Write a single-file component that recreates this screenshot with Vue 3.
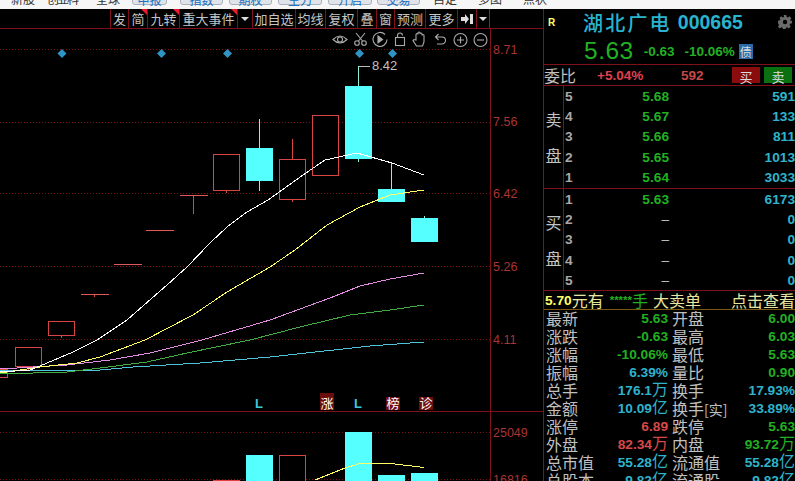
<template>
  <div class="page">
    <div class="topbar">
      <span
        v-for="t in topTabs"
        :key="t.text"
        class="tab"
        :class="{ btn: t.btn, tight: t.tight }"
        :style="{ width: t.w + 'px', marginLeft: t.gap + 'px' }"
      >{{ t.text }}</span>
    </div>
    <div class="main">
      <div class="left">
        <div class="toolbar">
          <div class="tool-spacer"></div>
          <span
            v-for="b in tools"
            :key="b.text"
            class="tool"
            :class="{ flag: b.flag, arrow: b.arrow, pin: b.pin }"
            :style="{ width: b.w + 'px' }"
          >
            <i v-if="b.arrow"></i>
            <svg v-else-if="b.pin" width="12" height="10" viewBox="0 0 12 10"><path d="M0 3h4V0l4 5-4 5V7H0z" fill="#ddd" /><rect x="9" y="0" width="3" height="10" fill="#ddd" /></svg>
            <template v-else>{{ b.text }}</template>
          </span>
        </div>
        <div class="chart">
          <svg class="canvas" width="543" height="452" viewBox="0 29 543 452">
            <line v-for="g in grid" :key="g" x1="0" x2="490" :y1="g" :y2="g" class="dash" />
            <line x1="0" x2="543" y1="411.5" y2="411.5" stroke="#80101a" />
            <line x1="490.5" x2="490.5" y1="29" y2="481" stroke="#80101a" />

            <g v-for="c in candles" :key="c.x">
              <line :x1="c.x + 13.5" :x2="c.x + 13.5" :y1="c.hi" :y2="c.lo" :stroke="c.up ? '#d84545' : '#8ff0e0'" />
              <line v-if="c.doji" :x1="c.x" :x2="c.x + 28" :y1="c.top + 0.5" :y2="c.top + 0.5" stroke="#e05858" />
              <rect v-else-if="c.up" :x="c.x + 0.5" :y="c.top + 0.5" :width="26" :height="c.h" fill="#000" stroke="#d84545" />
              <rect v-else :x="c.x" :y="c.top" :width="27" :height="c.h" fill="#55ffff" />
            </g>

            <polyline v-for="l in lines" :key="l.color" :points="l.points" :stroke="l.color" class="ma" />

            <path v-for="x in diamonds" :key="x" :d="`M${x} 49l4.500 4.500-4.500 4.500-4.500-4.500z`" fill="#2f93c4" />

            <line x1="358.500" x2="358.500" y1="66" y2="86" stroke="#8ff0e0" />
            <line x1="359" x2="370" y1="66.500" y2="66.500" stroke="#bbb" />
            <text x="372" y="70" class="peak">8.42</text>

            <g fill="none" stroke="#aaa" stroke-width="1.100">
              <path d="M333 39.500q7-7 14 0q-7 7-14 0z" /><circle cx="340" cy="39.500" r="2.500" />
              <path d="M356 33l6.500 8M365 33l-6.500 8" /><circle cx="357" cy="43" r="2.300" /><circle cx="364" cy="43" r="2.300" />
              <path d="M385 34.500a7 7 0 1 0 2 5" /><path d="M378 36l4.500 3.500-4.500 3.500z" fill="#aaa" />
              <rect x="395.500" y="37.500" width="9" height="8" /><path d="M397.500 37.500v-2a2.500 2.500 0 0 1 5 0" />
              <path d="M416 40v-5.500a1 1 0 0 1 2 0V33a1 1 0 0 1 2 0v1a1 1 0 0 1 2 0v1.500a1 1 0 0 1 2 0V42l-1.500 4h-6L413 40.500l1-1z" />
              <path d="M436 37h6a3.500 3.500 0 0 1 0 7h-5M438.500 34l-3 3 3 3" />
              <circle cx="460.500" cy="40" r="6.500" /><path d="M457 40h7M460.500 36.500v7" />
              <circle cx="480.500" cy="40" r="6.500" /><path d="M477 40h7" />
            </g>

            <g v-for="m in marks" :key="m.x">
              <rect v-if="m.red" :x="m.x - 7" :y="m.y" width="14" :height="410 - m.y" fill="#6b0d0d" />
              <text :x="m.x" y="408" text-anchor="middle" :class="m.red ? 'mark-red' : 'mark-l'">{{ m.text }}</text>
            </g>

            <text v-for="a in axis" :key="a.text" x="493" :y="a.y" class="axis">{{ a.text }}</text>

            <rect x="246" y="455" width="27" height="30" fill="#55ffff" />
            <rect x="345" y="432" width="27" height="53" fill="#55ffff" />
            <rect x="378" y="475" width="27" height="10" fill="#55ffff" />
            <rect x="411" y="473" width="27" height="12" fill="#55ffff" />
            <rect x="279.500" y="455.500" width="26" height="30" fill="#000" stroke="#d84545" />
            <rect x="213" y="480" width="27" height="2" fill="#e04040" />
            <polyline points="315,480 345,468 358,464 375,463.500 395,464 424,467.500" stroke="#ffff66" class="ma" />
          </svg>
        </div>
      </div>

      <div class="right">
        <div class="head">
          <div class="title-row">
            <span class="r-mark">R</span>
            <span class="name">湖北广电</span>
            <span class="code">000665</span>
            <svg class="gear" width="14" height="14" viewBox="0 0 16 16"><path d="M6.500 0h3l.4 2.200 1.500.6L13.200 1.500l2.100 2.100-1.300 1.800.6 1.500L16 6.500v3l-2.200.4-.6 1.500 1.300 1.800-2.100 2.100-1.800-1.300-1.500.6-.4 2.200h-3l-.4-2.200-1.500-.6-1.800 1.300-2.100-2.100 1.300-1.800-.6-1.500L0 9.500v-3l2.200-.4.600-1.500L1.500 3.600l2.100-2.100 1.800 1.300 1.500-.6z" fill="#6a6a6a" /><circle cx="8" cy="8" r="2.500" fill="#000" /></svg>
          </div>
          <div class="price-row">
            <span class="price">5.63</span>
            <span class="chg">-0.63</span>
            <span class="chg pct">-10.06%</span>
            <span class="bond">债</span>
          </div>
        </div>

        <div class="ratio">
          <span class="label wb">委比</span>
          <span class="ratio-pct">+5.04%</span>
          <span class="ratio-num">592</span>
          <span class="act buy">买</span>
          <span class="act sell">卖</span>
        </div>

        <div v-for="(side, i) in book" :key="side.label" class="book" :class="{ lower: i }">
          <div class="side-label">
            <span v-for="c in side.label" :key="c">{{ c }}</span>
          </div>
          <div class="levels">
            <div v-for="l in side.rows" :key="l.n" class="level">
              <span class="lv-n">{{ l.n }}</span>
              <span class="lv-p" :class="{ none: l.p === '–' }">{{ l.p }}</span>
              <span class="lv-v">{{ l.v }}</span>
            </div>
          </div>
        </div>

        <div class="big-order">
          <span class="yl">5.70</span><span class="cn">元有</span>
          <span class="stars">*****</span><span class="cn grn">手</span>
          <span class="cn bo">大卖单</span>
          <span class="cn look">点击查看</span>
        </div>

        <div class="stats">
          <div v-for="s in stats" :key="s.a" class="stat">
            <span class="label">{{ s.a }}</span>
            <span class="num" :class="s.ac">{{ s.av }}<em v-if="s.au">{{ s.au }}</em></span>
            <span class="label lb2">{{ s.b }}<em v-if="s.bx">{{ s.bx }}</em></span>
            <span class="num" :class="s.bc">{{ s.bv }}<em v-if="s.bu">{{ s.bu }}</em></span>
          </div>
        </div>
      </div>
    </div>
  </div>
</template>

<script setup>
const topTabs = [
  { text: "新股", w: 24, gap: 11 },
  { text: "创业科", w: 30, gap: 12, tight: 1 },
  { text: "全球", w: 24, gap: 19 },
  { text: "中报", w: 35, gap: 12, btn: 1 },
  { text: "指数", w: 43, gap: 13, btn: 1 },
  { text: "期权", w: 43, gap: 6, btn: 1 },
  { text: "主力", w: 44, gap: 6, btn: 1 },
  { text: "开启", w: 44, gap: 6, btn: 1 },
  { text: "交易", w: 43, gap: 5, btn: 1 },
  { text: "自定", w: 24, gap: 13 },
  { text: "多图", w: 24, gap: 21 },
  { text: "点状", w: 24, gap: 21 },
];

const tools = [
  { text: "发", w: 18 },
  { text: "简", w: 19, flag: 1 },
  { text: "九转", w: 32, flag: 1 },
  { text: "重大事件", w: 58, flag: 1 },
  { text: "more", w: 15, arrow: 1 },
  { text: "加自选", w: 43 },
  { text: "均线", w: 30 },
  { text: "复权", w: 32 },
  { text: "叠", w: 19 },
  { text: "窗", w: 18 },
  { text: "预测", w: 31 },
  { text: "更多", w: 32 },
  { text: "pin", w: 19, pin: 1 },
  { text: "menu", w: 14, arrow: 1 },
];

const grid = [49.5, 122.5, 193.5, 266.5, 339.5, 432.5, 479.5];
const axis = [
  { text: "8.71", y: 54 }, { text: "7.56", y: 126 }, { text: "6.42", y: 198 },
  { text: "5.26", y: 271 }, { text: "4.11", y: 344 }, { text: "25049", y: 437 }, { text: "16816", y: 484 },
];
const diamonds = [62, 161.5, 227.5, 359.5, 392.5];

const candles = [
  { x: -19, up: 1, top: 369, h: 8, hi: 369, lo: 377 },
  { x: 15, up: 1, top: 347, h: 19, hi: 347, lo: 370 },
  { x: 48, up: 1, top: 321, h: 14, hi: 321, lo: 338 },
  { x: 81, up: 1, doji: 1, top: 294, hi: 294, lo: 297 },
  { x: 114, up: 1, doji: 1, top: 264, hi: 264, lo: 265 },
  { x: 146, up: 1, doji: 1, top: 230, hi: 230, lo: 231 },
  { x: 180, up: 1, doji: 1, top: 195, hi: 195, lo: 214 },
  { x: 213, up: 1, top: 154, h: 36, hi: 154, lo: 193 },
  { x: 246, up: 0, top: 148, h: 33, hi: 119, lo: 191 },
  { x: 279, up: 1, top: 159, h: 40, hi: 139, lo: 202 },
  { x: 312, up: 1, top: 115, h: 60, hi: 115, lo: 176 },
  { x: 345, up: 0, top: 86, h: 73, hi: 66, lo: 162 },
  { x: 378, up: 0, top: 189, h: 13, hi: 163, lo: 202 },
  { x: 411, up: 0, top: 218, h: 24, hi: 216, lo: 242 },
];

const lines = [
  { color: "#4fc3d8", points: "0,370 100,370 133,367 200,363 270,357 370,346 424,342" },
  { color: "#3fae3f", points: "0,374 67,372 100,368 147,362 187,353 250,340 300,327 350,315 390,310 424,305" },
  { color: "#e38ee3", points: "0,369 67,365 110,360 150,353 202,340 270,320 330,298 360,286 390,279 424,273" },
  { color: "#ffff66", points: "0,373 40,367 77,363 100,357 145,340 193,315 227,292 270,267 295,250 327,225 360,207 390,195 424,190" },
  { color: "#ffffff", points: "0,372 30,370 40,366 73,352 97,340 127,320 167,285 187,267 210,243 227,227 247,212 268,200 303,175 325,160 357,153 392,163 424,175" },
];

const marks = [
  { x: 259, text: "L" },
  { x: 327, text: "涨", red: 1, y: 393 },
  { x: 358, text: "L" },
  { x: 393, text: "榜", red: 1, y: 397 },
  { x: 426, text: "诊", red: 1, y: 397 },
];

const book = [
  {
    label: "卖盘",
    rows: [
      { n: 5, p: "5.68", v: "591" }, { n: 4, p: "5.67", v: "133" }, { n: 3, p: "5.66", v: "811" },
      { n: 2, p: "5.65", v: "1013" }, { n: 1, p: "5.64", v: "3033" },
    ],
  },
  {
    label: "买盘",
    rows: [
      { n: 1, p: "5.63", v: "6173" }, { n: 2, p: "–", v: "0" }, { n: 3, p: "–", v: "0" },
      { n: 4, p: "–", v: "0" }, { n: 5, p: "–", v: "0" },
    ],
  },
];

const stats = [
  { a: "最新", av: "5.63", ac: "g", b: "开盘", bv: "6.00", bc: "g" },
  { a: "涨跌", av: "-0.63", ac: "g", b: "最高", bv: "6.03", bc: "g" },
  { a: "涨幅", av: "-10.06%", ac: "g", b: "最低", bv: "5.63", bc: "g" },
  { a: "振幅", av: "6.39%", ac: "c", b: "量比", bv: "0.90", bc: "g" },
  { a: "总手", av: "176.1", au: "万", ac: "c", b: "换手", bv: "17.93%", bc: "c" },
  { a: "金额", av: "10.09", au: "亿", ac: "c", b: "换手", bx: "[实]", bv: "33.89%", bc: "c" },
  { a: "涨停", av: "6.89", ac: "r", b: "跌停", bv: "5.63", bc: "g" },
  { a: "外盘", av: "82.34", au: "万", ac: "r", b: "内盘", bv: "93.72", bu: "万", bc: "g" },
  { a: "总市值", av: "55.28", au: "亿", ac: "c", b: "流通值", bv: "55.28", bu: "亿", bc: "c" },
  { a: "总股本", av: "9.82", au: "亿", ac: "c", b: "流通股", bv: "9.82", bu: "亿", bc: "c" },
];
</script>

<style>
html, body { margin: 0; background: #000; overflow: hidden; }
</style>

<style scoped>
.page {
  width: 795px;
  height: 481px;
  background: #000;
  overflow: hidden;
  font-family: "Noto Sans CJK SC", "Liberation Sans", sans-serif;
  color: #c4c4c4;
}
.topbar {
  height: 9px;
  background: #f6f6f6;
  display: flex;
  overflow: hidden;
  font-size: 12px;
  color: #333;
}
.tab {
  flex: none;
  height: 12px;
  margin-top: -7px;
  line-height: 12px;
  white-space: nowrap;
}
.tab.tight { letter-spacing: -2px; }
.tab.btn {
  box-sizing: border-box;
  background: #e0e4ea;
  border: 1px solid #a8b0c0;
  border-radius: 3px;
  text-align: center;
  color: #2070c0;
}
.main { display: flex; height: 472px; }
.left { width: 543px; flex: none; overflow: hidden; }
.toolbar {
  height: 19px;
  display: flex;
  border-bottom: 1px solid #80101a;
  font-size: 13px;
  line-height: 19px;
}
.tool-spacer { width: 110px; flex: none; }
.tool {
  position: relative;
  flex: none;
  box-sizing: border-box;
  border-left: 1px solid #80101a;
  text-align: center;
  color: #c4c4c4;
  white-space: nowrap;
}
.tool:last-child { border-right: 1px solid #a01822; }
.tool.flag::after {
  content: "";
  position: absolute;
  top: 0;
  right: 0;
  border-top: 6px solid #e81c2e;
  border-left: 6px solid transparent;
}
.tool.arrow { display: flex; align-items: center; justify-content: center; }
.tool.arrow i { border-top: 4px solid #ddd; border-left: 4px solid transparent; border-right: 4px solid transparent; }
.tool.pin { display: flex; align-items: center; justify-content: center; }
.chart { height: 452px; }
.canvas { display: block; }
.dash { stroke: #7a1018; stroke-dasharray: 1 2; }
.ma { fill: none; shape-rendering: crispEdges; }
.peak { fill: #c0c0c0; font: 13px "Liberation Sans", sans-serif; }
.axis { fill: #a83434; font: 12.500px "Liberation Sans", sans-serif; }
.mark-l { fill: #3cc8d8; font: bold 13px "Liberation Sans", sans-serif; }
.mark-red { fill: #fff; font-size: 13px; }

.right {
  width: 252px;
  flex: none;
  border-left: 1px solid #80101a;
  box-sizing: border-box;
  overflow: hidden;
}
.head { height: 56px; border-bottom: 1px solid #80101a; box-sizing: border-box; }
.title-row { display: flex; align-items: center; height: 26px; }
.r-mark { color: #ffff66; font: bold 10px "Liberation Sans", sans-serif; margin-left: 4px; width: 35px; flex: none; }
.name { color: #2ab3cf; font-size: 20px; font-weight: 500; letter-spacing: 2.200px; white-space: nowrap; }
.code { color: #2ab3cf; font: bold 19.500px "Liberation Sans", sans-serif; margin-left: 6px; }
.gear { margin-left: auto; margin-right: 3px; }
.price-row { display: flex; align-items: center; height: 26px; margin-top: 3px; color: #22b022; }
.price { font: 400 24.500px "Liberation Sans", sans-serif; letter-spacing: .5px; margin-left: 40px; }
.chg { font: bold 13.500px "Liberation Sans", sans-serif; margin-left: 10px; }
.bond { background: #2a6aa8; color: #ddd; font-size: 12px; margin-left: 4px; width: 14px; height: 15px; line-height: 15px; text-align: center; }

.ratio { display: flex; align-items: center; height: 21px; box-sizing: border-box; border-bottom: 1px solid #80101a; font: bold 13.500px "Liberation Sans", sans-serif; }
.label { font-family: "Noto Sans CJK SC", sans-serif; font-weight: 400; font-size: 16px; color: #c0c0c0; line-height: 18px; }
.wb { width: 53px; flex: none; }
.ratio-pct { color: #e04050; width: 84px; flex: none; }
.ratio-num { color: #c84848; width: 51px; flex: none; }
.act { width: 28px; height: 16px; line-height: 15px; text-align: center; color: #ddd; font: 400 13px "Noto Sans CJK SC", sans-serif; flex: none; }
.buy { background: #8a0c0c; margin-right: 4px; }
.sell { background: #0a7010; }

.book { display: flex; height: 102px; border-bottom: 1px solid #80101a; overflow: hidden; }
.book.lower { height: 101px; }
.side-label {
  width: 20px;
  flex: none;
  box-sizing: border-box;
  border-right: 1px solid #80101a;
  display: flex;
  flex-direction: column;
  justify-content: center;
  align-items: center;
  gap: 20px;
  line-height: 16px;
  font-size: 16px;
}
.levels { flex: 1; min-width: 0; }
.level {
  height: 20.300px;
  display: grid;
  grid-template-columns: 12px 92px 1fr;
  align-items: center;
  padding-left: 1px;
  font: bold 13.700px "Liberation Sans", sans-serif;
}
.lv-n { color: #a8a8a8; }
.lv-p { color: #22b022; text-align: right; }
.lv-p.none { color: #c8c8c8; font-weight: 400; }
.lv-v { color: #2fb4cc; text-align: right; }

.big-order {
  height: 19px;
  box-sizing: border-box;
  display: flex;
  align-items: center;
  border-bottom: 1px solid #7a5a10;
  padding-left: 1px;
  font: bold 13.700px "Liberation Sans", sans-serif;
  white-space: nowrap;
}
.yl { color: #ffff66; }
.cn { font: 400 16px/18px "Noto Sans CJK SC", sans-serif; color: #e6e6a0; }
.stars { color: #22b022; margin-left: 6px; font-size: 11.500px; }
.grn { color: #22b022; }
.bo { margin-left: 5px; }
.look { margin-left: auto; }

.stat {
  height: 18px;
  display: grid;
  grid-template-columns: 43px 79px 1fr auto;
  align-items: start;
  padding-left: 2px;
  font: bold 13.700px/18px "Liberation Sans", sans-serif;
}
.stat .label { height: 18px; margin-top: -1px; white-space: nowrap; }
.num { height: 18px; text-align: right; white-space: nowrap; }
.num em, .label em { font: 400 16px "Noto Sans CJK SC", sans-serif; font-style: normal; line-height: 0; }
.label em { font-size: 14px; }
.lb2 { padding-left: 4px; }
.g { color: #22b022; }
.c { color: #2fb4cc; }
.r { color: #d84848; }
</style>
